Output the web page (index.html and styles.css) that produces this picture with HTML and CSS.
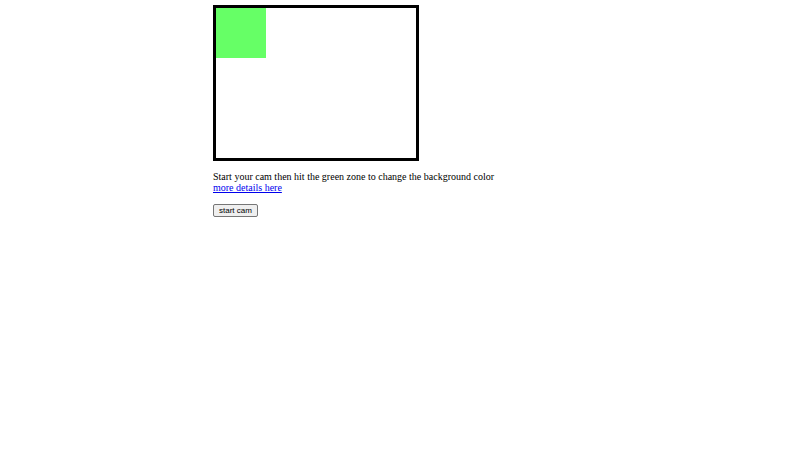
FILE: index.html
```html
<!DOCTYPE html>
<html>
<head>
<meta charset="utf-8">
<link rel="stylesheet" href="styles.css">
</head>
<body>
<div class="wrap">
  <div class="stage"><div class="zone"></div></div>
  <p class="info">Start your cam then hit the green zone to change the background color<br><a href="#" class="more">more details here</a></p>
  <button class="btn">start cam</button>
</div>
</body>
</html>
```
FILE: styles.css
```css
html, body { margin: 0; padding: 0; background: #fff; }
body { font-family: "Liberation Serif", "Times New Roman", serif; font-size: 10px; color: #000; }
.wrap { margin-left: 213px; padding-top: 5px; }
.stage { width: 200px; height: 150px; border: 3px solid #000; }
.zone { width: 50px; height: 50px; background: #66ff66; }
.info { margin: 10px 0 11px; line-height: 11px; }
.more { color: #0000ee; text-decoration: underline; }
.btn {
  display: block;
  font-family: "Liberation Sans", Arial, sans-serif;
  font-size: 8px;
  line-height: 9px;
  padding: 1px 5px;
  border: 1px solid #767676;
  border-radius: 2px;
  background: #efefef;
  color: #000;
  margin: 0;
  height: 13px;
}
```
